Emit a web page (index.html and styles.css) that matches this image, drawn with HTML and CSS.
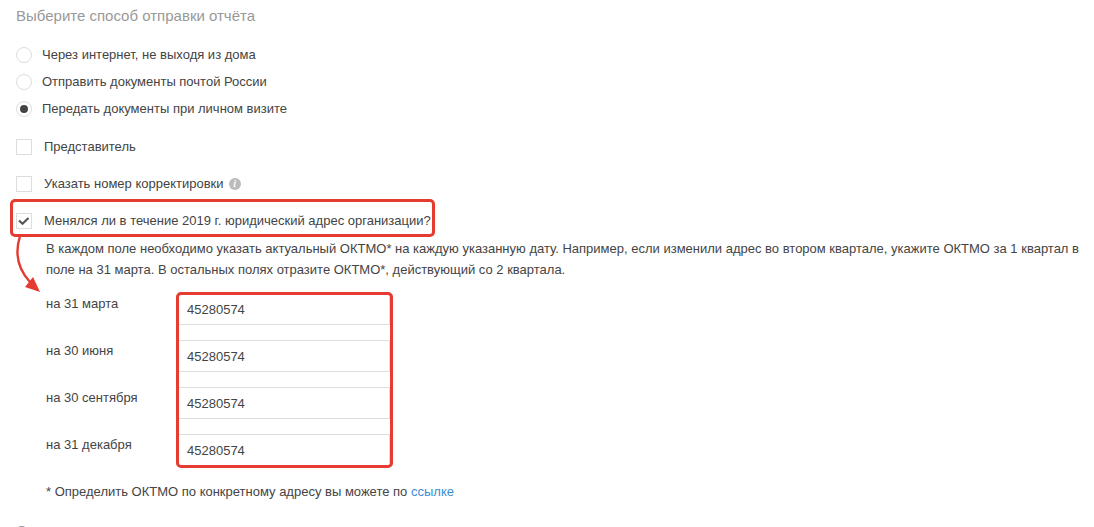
FILE: index.html
```html
<!DOCTYPE html>
<html lang="en">
<head>
    <meta charset="UTF-8">
    <title>Способ отправки отчёта</title>
    <link rel="stylesheet" href="styles.css">
</head>
<body>
    <div class="page">
        <h2 class="title">Выберите способ отправки отчёта</h2>
        <div class="radios">
            <div class="radio-row"><span class="radio"></span>Через интернет, не выходя из дома</div>
            <div class="radio-row"><span class="radio"></span>Отправить документы почтой России</div>
            <div class="radio-row"><span class="radio checked"></span>Передать документы при личном визите</div>
        </div>
        <div class="checks">
            <div class="check-row"><span class="checkbox"></span>Представитель</div>
            <div class="check-row"><span class="checkbox"></span>Указать номер корректировки<span class="info">i</span></div>
            <div class="check-row">
                <span class="checkbox">
                    <svg width="12" height="8" viewBox="0 0 12 8"><path d="M1 3.5l3.5 3.2 6-5.7" fill="none" stroke="#555" stroke-width="2.2"/></svg>
                </span>Менялся ли в течение 2019 г. юридический адрес организации?
            </div>
        </div>
        <div class="details">
            <p class="note">В каждом поле необходимо указать актуальный ОКТМО* на каждую указанную дату. Например, если изменили адрес во втором квартале, укажите ОКТМО за 1 квартал в поле на 31 марта. В остальных полях отразите ОКТМО*, действующий со 2 квартала.</p>
            <div class="fields">
                <div class="field-row"><label>на 31 марта</label><div class="field">45280574</div></div>
                <div class="field-row"><label>на 30 июня</label><div class="field">45280574</div></div>
                <div class="field-row"><label>на 30 сентября</label><div class="field">45280574</div></div>
                <div class="field-row"><label>на 31 декабря</label><div class="field">45280574</div></div>
            </div>
            <p class="footnote">* Определить ОКТМО по конкретному адресу вы можете по <a href="#">ссылке</a></p>
        </div>
        <h2 class="title next-title">С</h2>
    </div>

    <!-- red annotations on top of the screenshot -->
    <div class="mark mark-question"></div>
    <div class="mark mark-fields"></div>
    <svg class="arrow" width="50" height="70" viewBox="0 0 50 70">
        <path d="M15 0C10 16 12 32 25 46" fill="none" stroke="#e53b30" stroke-width="2.4"/>
        <path d="M35 56L20 51 28 41z" fill="#e53b30"/>
    </svg>
</body>
</html>
```

FILE: styles.css
```css
html, body {
    margin: 0;
    height: 527px;
    overflow: hidden;
    background-color: white;
}
body {
    font-family: 'Liberation Sans', Arial, sans-serif;
    font-size: 13px;
    color: #444;
    position: relative;
}
.page {
    padding: 8px 16px 0;
}
.title {
    margin: 0;
    font-size: 15px;
    font-weight: normal;
    line-height: 16px;
    color: #999;
}
.next-title {
    margin-top: 24px;
}
.radios {
    margin-top: 17px;
}
.radio-row {
    display: flex;
    align-items: center;
    height: 27px;
}
.radio {
    box-sizing: border-box;
    width: 16px;
    height: 16px;
    margin-right: 10px;
    border: 1px solid #ddd;
    border-radius: 50%;
    display: flex;
    align-items: center;
    justify-content: center;
}
.radio.checked::before {
    content: "";
    width: 8px;
    height: 8px;
    border-radius: 50%;
    background-color: #444;
}
.checks {
    margin-top: 6px;
}
.check-row {
    display: flex;
    align-items: center;
    height: 37px;
}
.checkbox {
    box-sizing: border-box;
    width: 16px;
    height: 16px;
    margin-right: 12px;
    border: 1px solid #ddd;
    display: flex;
    align-items: center;
    justify-content: center;
}
.info {
    width: 12px;
    height: 12px;
    margin-left: 5px;
    border-radius: 50%;
    background-color: #bbb;
    color: white;
    font-family: 'Liberation Serif', serif;
    font-size: 10px;
    font-weight: bold;
    font-style: italic;
    line-height: 12px;
    text-align: center;
}
.details {
    padding-left: 30px;
}
.note {
    margin: -1px 0 0;
    line-height: 21px;
    width: 1040px;
}
.fields {
    margin-top: 13px;
}
.field-row {
    display: flex;
    height: 47px;
}
.field-row label {
    width: 132px;
    padding-top: 3px;
}
.field {
    box-sizing: border-box;
    width: 212px;
    height: 32px;
    padding: 8px 8px 0;
    border: 1px solid #ddd;
}
.footnote {
    margin: 3px 0 0;
}
a {
    color: #3b8ed4;
    text-decoration: none;
}
.mark {
    position: absolute;
    box-sizing: border-box;
    border: 3px solid #e53b30;
    border-radius: 5px;
}
.mark-question {
    left: 10px;
    top: 199px;
    width: 425px;
    height: 38px;
}
.mark-fields {
    left: 176px;
    top: 292px;
    width: 217px;
    height: 176px;
}
.arrow {
    position: absolute;
    left: 5px;
    top: 236px;
}
```
